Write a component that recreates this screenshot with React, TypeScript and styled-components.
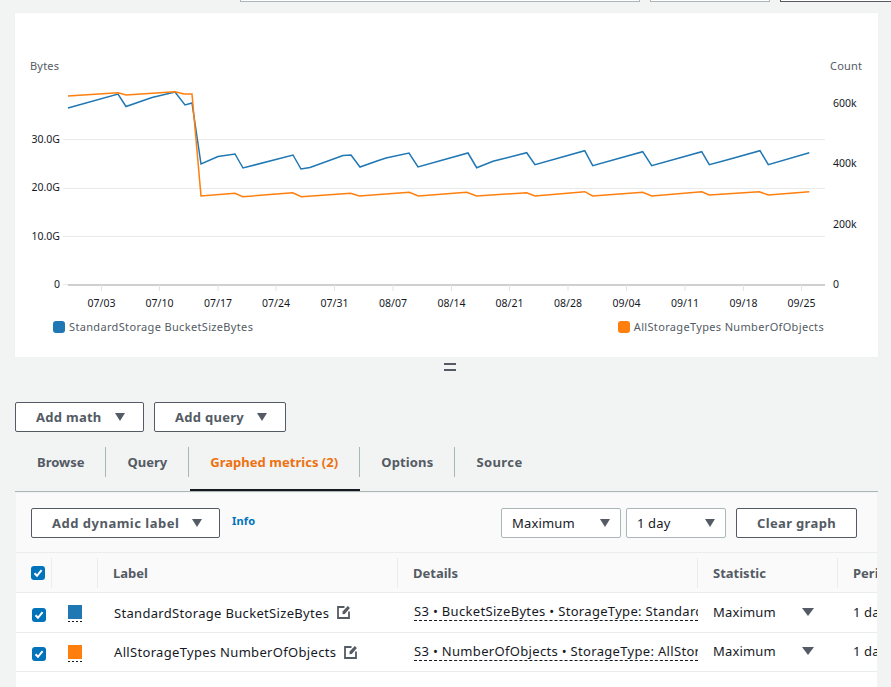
import React from "react";
import styled, { createGlobalStyle } from "styled-components";

const Global = createGlobalStyle`
  html, body { margin: 0; padding: 0; background: #f2f3f3; }
  body { font-family: "Noto Sans", "Open Sans", sans-serif; overflow: hidden; }
  * { box-sizing: border-box; }
`;

const Page = styled.div`
  width: 891px;
  height: 687px;
  overflow: hidden;
  display: flex;
  flex-direction: column;
`;
const TopBar = styled.div`
  height: 2px;
  display: flex;
  padding-left: 240px;
  gap: 10px;
  flex: none;
  overflow: hidden;
`;
const TopField = styled.div<{ $w: number; $dark?: boolean }>`
  width: ${(p) => p.$w}px;
  height: 2px;
  flex: none;
  background: #fff;
  border-bottom: 1px solid ${(p) => (p.$dark ? "#545b64" : "#aab7b8")};
  border-left: 1px solid ${(p) => (p.$dark ? "#545b64" : "#aab7b8")};
  border-right: 1px solid ${(p) => (p.$dark ? "#545b64" : "#aab7b8")};
`;
const Card = styled.section`
  margin: 11px 0 0 15px;
  width: 863px;
  height: 344px;
  flex: none;
  background: #fff;
  box-shadow: 0 0 1px #e4e8e8;
`;
const ChartSvg = styled.svg`
  display: block;
  width: 863px;
  height: 303px;
`;
const Legend = styled.div`
  display: flex;
  justify-content: space-between;
  padding: 4px 54px 0 38px;
`;
const LegendItem = styled.div`
  display: flex;
  align-items: center;
  gap: 4px;
  font-size: 11px;
  line-height: 14px;
  letter-spacing: 0.34px;
  color: #545b64;
`;
const LegendDot = styled.span<{ $c: string }>`
  width: 12px;
  height: 12px;
  border-radius: 3px;
  background: ${(p) => p.$c};
`;
const Handle = styled.div`
  height: 45px;
  flex: none;
  display: flex;
  justify-content: center;
  padding: 6px 0 0 9px;
`;
const HandleMark = styled.div`
  width: 12px;
  height: 8px;
  border-top: 2px solid #545b64;
  border-bottom: 2px solid #545b64;
`;
const Actions = styled.div`
  display: flex;
  gap: 10px;
  padding-left: 15px;
  flex: none;
`;
const Button = styled.button<{ $w: number; $ls?: number }>`
  width: ${(p) => p.$w}px;
  height: 30px;
  padding: 0 0 0 20px;
  display: flex;
  align-items: center;
  gap: 13px;
  flex: none;
  background: #fff;
  border: 1px solid #545b64;
  border-radius: 2px;
  color: #545b64;
  font: 700 13px/1 "Noto Sans", sans-serif;
  letter-spacing: ${(p) => p.$ls ?? 0.28}px;
`;
const CenterButton = styled(Button)`
  padding: 0;
  justify-content: center;
`;
const Caret = styled.span`
  width: 0;
  height: 0;
  border-left: 5.5px solid transparent;
  border-right: 5.5px solid transparent;
  border-top: 8px solid #545b64;
  flex: none;
`;
const Tabs = styled.nav`
  display: flex;
  margin: 15px 13px 0 15px;
  height: 45px;
  padding-left: 1px;
  border-bottom: 1px solid #aab7b8;
  flex: none;
`;
const Tab = styled.div<{ $active?: boolean }>`
  height: 44px;
  position: relative;
  ${(p) =>
    p.$active
      ? `&::after { content: ""; position: absolute; left: 1px; right: 0; bottom: 0; height: 2px; background: #16191f; }`
      : ""}
`;
const TabLabel = styled.div<{ $active?: boolean; $last?: boolean; $ls: number }>`
  height: 30px;
  padding: 0 21px;
  display: flex;
  align-items: center;
  font-size: 13px;
  font-weight: 700;
  white-space: nowrap;
  letter-spacing: ${(p) => p.$ls}px;
  color: ${(p) => (p.$active ? "#ec7211" : "#545b64")};
  border-right: ${(p) => (p.$last ? "none" : "1px solid #aab7b8")};
`;
const Panel = styled.section`
  margin: 1px 14px 0 16px;
  flex: 1;
  min-height: 0;
  background: #fff;
  overflow: hidden;
`;
const Controls = styled.div`
  height: 60px;
  padding: 15px 20px 0 15px;
  display: flex;
  background: #fafafa;
  border-bottom: 1px solid #eaeded;
`;
const InfoLink = styled.a`
  margin: 5px 0 0 12px;
  font-size: 11px;
  line-height: 16px;
  font-weight: 700;
  color: #0073bb;
  height: 16px;
  letter-spacing: 0.2px;
`;
const Right = styled.div`
  margin-left: auto;
  display: flex;
`;
const Select = styled.div<{ $w: number }>`
  width: ${(p) => p.$w}px;
  height: 30px;
  padding: 0 10px;
  margin-right: 5px;
  display: flex;
  align-items: center;
  justify-content: space-between;
  background: #fff;
  border: 1px solid #aab7b8;
  border-radius: 2px;
  font-size: 13px;
  letter-spacing: 0.15px;
  color: #16191f;
`;
const ClearWrap = styled.div`
  margin-left: 5px;
`;
const Row = styled.div<{ $h: number; $head?: boolean }>`
  display: grid;
  grid-template-columns: 36px 46px 300px 300px 140px 140px;
  height: ${(p) => p.$h}px;
  background: ${(p) => (p.$head ? "#fafafa" : "#fff")};
  border-bottom: 1px solid #eaeded;
  align-items: center;
`;
const HeadCell = styled.div<{ $sep?: boolean }>`
  height: 30px;
  padding-left: 15px;
  display: flex;
  align-items: center;
  font-size: 13px;
  font-weight: 700;
  color: #545b64;
  border-right: ${(p) => (p.$sep === false ? "none" : "1px solid #eaeded")};
  white-space: nowrap;
`;
const Cell = styled.div<{ $pad?: number }>`
  padding-left: ${(p) => p.$pad ?? 0}px;
  display: flex;
  align-items: center;
  font-size: 13px;
  letter-spacing: 0.32px;
  color: #16191f;
  white-space: nowrap;
  min-width: 0;
  overflow: hidden;
`;
const CheckBox = styled.span`
  width: 14px;
  height: 14px;
  border-radius: 3px;
  background: #0073bb;
  display: flex;
  align-items: center;
  justify-content: center;
  flex: none;
`;
const RowCheck = styled.span`
  display: block;
  margin-top: 4px;
`;
const SwatchWrap = styled.span`
  display: block;
  padding-bottom: 3px;
  margin: 2px 0 0 16px;
  width: 14px;
  background: repeating-linear-gradient(90deg, #16191f 0 2px, transparent 2px 4px) left bottom / 14px 1px no-repeat;
`;
const Swatch = styled.span<{ $c: string }>`
  display: block;
  width: 14px;
  height: 14px;
  background: ${(p) => p.$c};
`;
const RowLabel = styled.span`
  margin-right: 8px;
`;
const DetailLink = styled.span`
  display: block;
  width: 284px;
  overflow: hidden;
  line-height: 17px;
  margin-top: -1px;
  border-bottom: 1px dashed #16191f;
`;
const StatCell = styled(Cell)`
  justify-content: space-between;
  padding: 0 24px 2px 15px;
  letter-spacing: 0.15px;
`;
const PeriodCell = styled(Cell)`
  padding: 0 0 2px 15px;
  letter-spacing: 0.15px;
`;
const SmallCaret = styled(Caret)`
  border-left-width: 6px;
  border-right-width: 6px;
  border-top-width: 8px;
`;

const blue = "68,108 118,94 126,106.5 152,97.5 175,92 185,105 192,103 201,164 218,156.5 235,154 243,168 293,155 301,169 310,167.5 343,155.5 351,155 360,167 377,161 386,158 409,153 418,167 468,153 476.7,167.7 493,161.3 526.7,152.7 535,164.7 584.7,150.7 592.7,165.7 642.7,151.7 651.7,165.7 701.7,151.7 709.3,164.7 726.7,160 760,150.7 768.3,164.7 809.3,152.7";
const orange = "68,96 118,92.7 126,95 175,91.7 184,94 192,94 201,196 235,193.3 242.7,196.7 292.7,192.7 301.3,196.7 350.7,193.3 359.3,196 409.3,192.3 418.3,196 466.7,192.3 476.7,196 526.7,192.7 535,196 584.7,191.7 592.7,196 642.7,192.3 651.7,196 701.7,191.7 709.3,195 759.3,191.7 768.3,195 809.3,191.7";
const ticks: [number, string][] = [
  [101.5, "07/03"], [159.5, "07/10"], [218, "07/17"], [276, "07/24"], [334.5, "07/31"], [393, "08/07"],
  [451.5, "08/14"], [509.5, "08/21"], [568, "08/28"], [626.5, "09/04"], [685, "09/11"], [743.5, "09/18"], [801.5, "09/25"],
];
const leftAxis: [number, string][] = [[139, "30.0G"], [187, "20.0G"], [236, "10.0G"], [284, "0"]];
const rightAxis: [number, string][] = [[103, "600k"], [163, "400k"], [224, "200k"], [284, "0"]];

const Chart = () => (
  <ChartSvg viewBox="15 13 863 303" fontFamily="'Noto Sans', sans-serif" fontSize="10.5">
    {[139.5, 188.5, 236.5].map((y) => (
      <line key={y} x1="63" x2="825" y1={y} y2={y} stroke="#e8eaea" strokeWidth="1" />
    ))}
    <line x1="63" x2="68" y1="284.5" y2="284.5" stroke="#e8eaea" />
    <line x1="68" x2="825" y1="285" y2="285" stroke="#cfcfcf" strokeWidth="2" />
    {ticks.map(([x, t]) => (
      <g key={t}>
        <line x1={x} x2={x} y1="285" y2="291" stroke="#e3e3e3" />
        <text x={x} y="306.5" textAnchor="middle" fill="#16191f">{t}</text>
      </g>
    ))}
    <text x="30" y="70" fill="#545b64" fontSize="11" letterSpacing="0.2">Bytes</text>
    <text x="830" y="70" fill="#545b64" fontSize="11" letterSpacing="0.2">Count</text>
    {leftAxis.map(([y, t]) => (
      <text key={t} x="60" y={y + 4} textAnchor="end" fill="#16191f">{t}</text>
    ))}
    {rightAxis.map(([y, t]) => (
      <text key={t} x="833" y={y + 4} fill="#16191f">{t}</text>
    ))}
    <polyline points={blue} fill="none" stroke="#1f77b4" strokeWidth="1.5" />
    <polyline points={orange} fill="none" stroke="#ff7f0e" strokeWidth="1.5" />
  </ChartSvg>
);

const Check = () => (
  <CheckBox>
    <svg width="12" height="12" viewBox="0 0 12 12">
      <path d="M2.5 6.2 L5 8.8 L9.6 3.2" fill="none" stroke="#fff" strokeWidth="2" />
    </svg>
  </CheckBox>
);

const EditIcon = () => (
  <svg width="13" height="14" viewBox="0 0 13 14" style={{ flex: "none", marginTop: -1 }}>
    <path d="M7.5 2 H1 V13 H12 V6.5" fill="none" stroke="#545b64" strokeWidth="1.8" />
    <path d="M5.5 9.2 L5.6 6.6 L10.8 1 L12.9 3 L7.8 8.9 Z" fill="#545b64" />
  </svg>
);

const tabs: [string, number][] = [["Browse", 0], ["Query", 0], ["Graphed metrics (2)", 0.03], ["Options", 0.15], ["Source", 0.4]];

const rows = [
  { c: "#1f77b4", label: "StandardStorage BucketSizeBytes", detail: "S3 • BucketSizeBytes • StorageType: StandardStorage • BucketName", h: 40 },
  { c: "#ff7f0e", label: "AllStorageTypes NumberOfObjects", detail: "S3 • NumberOfObjects • StorageType: AllStorageTypes • BucketName", h: 39 },
];

export default function App() {
  return (
    <Page>
      <Global />
      <TopBar>
        <TopField $w={400} />
        <TopField $w={120} />
        <TopField $w={120} $dark />
      </TopBar>
      <Card>
        <Chart />
        <Legend>
          <LegendItem><LegendDot $c="#1f77b4" />StandardStorage BucketSizeBytes</LegendItem>
          <LegendItem><LegendDot $c="#ff7f0e" />AllStorageTypes NumberOfObjects</LegendItem>
        </Legend>
      </Card>
      <Handle><HandleMark /></Handle>
      <Actions>
        <Button $w={129}>Add math<Caret /></Button>
        <Button $w={132}>Add query<Caret /></Button>
      </Actions>
      <Tabs>
        {tabs.map(([t, ls], i) => (
          <Tab key={t} $active={i === 2}>
            <TabLabel $active={i === 2} $last={i === 4} $ls={ls}>{t}</TabLabel>
          </Tab>
        ))}
      </Tabs>
      <Panel>
        <Controls>
          <Button $w={189} $ls={0.5}>Add dynamic label<Caret /></Button>
          <InfoLink>Info</InfoLink>
          <Right>
            <Select $w={120}>Maximum<Caret /></Select>
            <Select $w={100}>1 day<Caret /></Select>
            <ClearWrap><CenterButton $w={121} $ls={0.35}>Clear graph</CenterButton></ClearWrap>
          </Right>
        </Controls>
        <Row $h={40} $head>
          <HeadCell><Check /></HeadCell>
          <HeadCell />
          <HeadCell>Label</HeadCell>
          <HeadCell>Details</HeadCell>
          <HeadCell>Statistic</HeadCell>
          <HeadCell $sep={false}>Period</HeadCell>
        </Row>
        {rows.map((r) => (
          <Row key={r.label} $h={r.h}>
            <Cell $pad={16}><RowCheck><Check /></RowCheck></Cell>
            <Cell><SwatchWrap><Swatch $c={r.c} /></SwatchWrap></Cell>
            <Cell $pad={16}><RowLabel>{r.label}</RowLabel><EditIcon /></Cell>
            <Cell $pad={16}><DetailLink>{r.detail}</DetailLink></Cell>
            <StatCell>Maximum<SmallCaret /></StatCell>
            <PeriodCell>1 day</PeriodCell>
          </Row>
        ))}
      </Panel>
    </Page>
  );
}
